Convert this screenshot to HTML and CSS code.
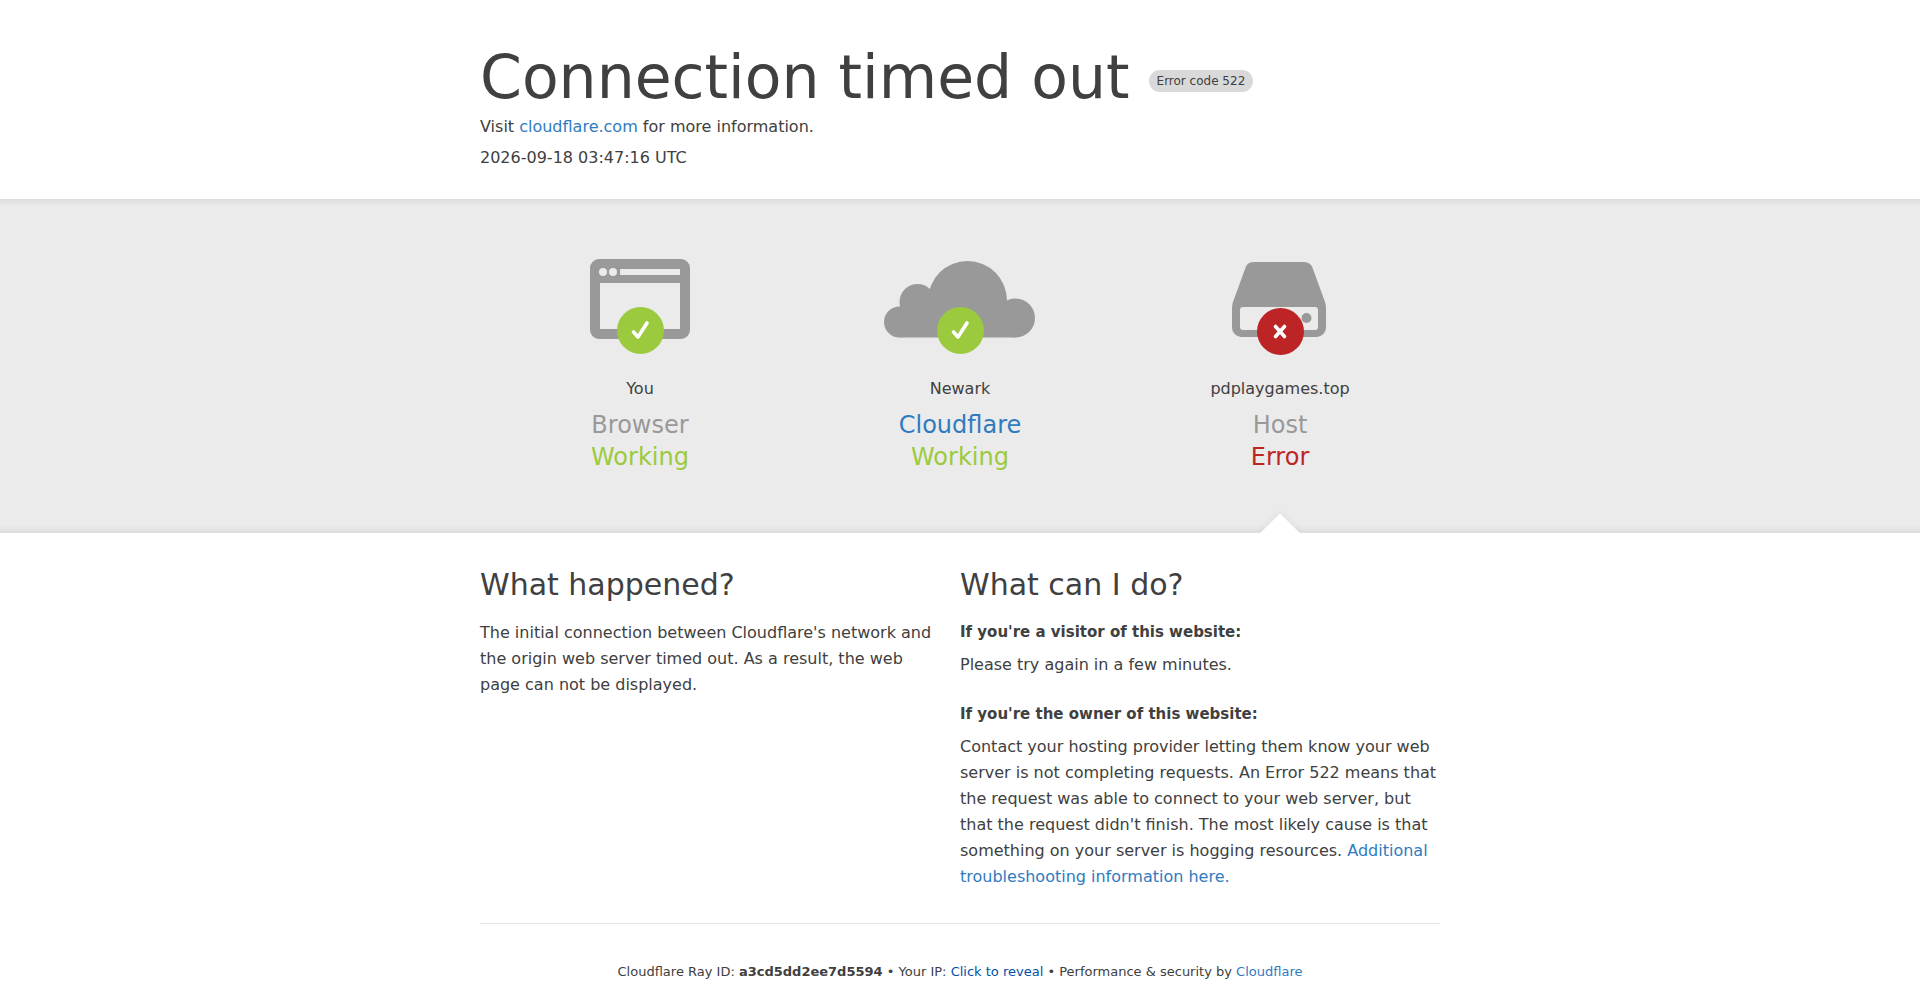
FILE: index.html
```html
<!DOCTYPE html>
<html lang="en-US">
<head>
  <meta charset="UTF-8" />
  <meta name="viewport" content="width=device-width, initial-scale=1.0" />
  <title>pdplaygames.top | 522: Connection timed out</title>
  <link rel="stylesheet" href="styles.css">
</head>
<body>
  <header class="container header">
    <h1>
      <span>Connection timed out</span>
      <span class="code-label">Error code 522</span>
    </h1>
    <p>Visit <a href="https://www.cloudflare.com/">cloudflare.com</a> for more information.</p>
    <p class="timestamp">2026-09-18 03:47:16 UTC</p>
  </header>

  <section class="status-band">
    <div class="container status-row">
      <div class="status">
        <svg class="status-icon" viewBox="0 0 160 100" aria-hidden="true">
          <path fill="#999" fill-rule="evenodd" d="M39 2H121A9 9 0 0 1 130 11V73A9 9 0 0 1 121 82H39A9 9 0 0 1 30 73V11A9 9 0 0 1 39 2ZM40 26V72H120V26ZM60 12V18H120V12Z" />
          <circle cx="43" cy="15" r="4" fill="#ebebeb" />
          <circle cx="53" cy="15" r="4" fill="#ebebeb" />
          <circle cx="80.500" cy="73.500" r="23.500" fill="#9bca3e" />
          <path fill="none" stroke="#fff" stroke-width="3.600" stroke-linecap="round" stroke-linejoin="round" d="M73.500 75L78 80L87 66" />
        </svg>
        <span class="place">You</span>
        <h3>Browser</h3>
        <span class="state ok">Working</span>
      </div>
      <div class="status">
        <svg class="status-icon" viewBox="0 0 160 100" aria-hidden="true">
          <g fill="#999">
            <circle cx="19.500" cy="65" r="15.500" />
            <circle cx="37.500" cy="45" r="18" />
            <circle cx="87.500" cy="43.500" r="39.500" />
            <circle cx="135.500" cy="61" r="19.500" />
            <path d="M19.500 80.500V60L37 45H120L135.500 60V80.500Z" />
          </g>
          <circle cx="80.500" cy="73.500" r="23.500" fill="#9bca3e" />
          <path fill="none" stroke="#fff" stroke-width="3.600" stroke-linecap="round" stroke-linejoin="round" d="M73.500 75L78 80L87 66" />
        </svg>
        <span class="place">Newark</span>
        <h3><a href="https://www.cloudflare.com/">Cloudflare</a></h3>
        <span class="state ok">Working</span>
      </div>
      <div class="status failed">
        <svg class="status-icon" viewBox="0 0 160 100" aria-hidden="true">
          <path fill="#999" fill-rule="evenodd" d="M53 5H104Q111 5 113 12L125 45Q126 48 126 51V70A9.500 9.500 0 0 1 117 80H41A9.500 9.500 0 0 1 32 70V51Q32 48 33 45L45 12Q47 5 53 5ZM43 50Q40 50 40 53V70Q40 73 43 73H115Q118 73 118 70V53Q118 50 115 50Z" />
          <circle cx="106.500" cy="61" r="5" fill="#999" />
          <circle cx="80.500" cy="74.500" r="23.500" fill="#bd2426" />
          <path fill="none" stroke="#fff" stroke-width="3.600" stroke-linecap="round" d="M75.500 69.500L84.500 79.500M84.500 69.500L75.500 79.500" />
        </svg>
        <span class="place">pdplaygames.top</span>
        <h3>Host</h3>
        <span class="state error">Error</span>
      </div>
    </div>
  </section>

  <main class="container columns">
    <section class="column">
      <h2>What happened?</h2>
      <p>The initial connection between Cloudflare's network and the origin web server timed out. As a result, the web page can not be displayed.</p>
    </section>
    <section class="column">
      <h2>What can I do?</h2>
      <h3>If you're a visitor of this website:</h3>
      <p>Please try again in a few minutes.</p>
      <h3>If you're the owner of this website:</h3>
      <p>Contact your hosting provider letting them know your web server is not completing requests. An Error 522 means that the request was able to connect to your web server, but that the request didn't finish. The most likely cause is that something on your server is hogging resources. <a href="https://support.cloudflare.com/">Additional troubleshooting information here.</a></p>
    </section>
  </main>

  <footer class="container footer">
    Cloudflare Ray ID: <strong>a3cd5dd2ee7d5594</strong> &bull;
    Your IP: <button type="button" id="ip-reveal">Click to reveal</button> &bull;
    Performance &amp; security by <a href="https://www.cloudflare.com/">Cloudflare</a>
  </footer>
</body>
</html>
```
FILE: styles.css
```css
* {
  box-sizing: border-box;
}
body {
  margin: 0;
  background-color: #fff;
  color: #404040;
  font-family: "DejaVu Sans", sans-serif;
  font-size: 16px;
  line-height: 24px;
}
h1, h2, h3, p {
  margin: 0;
  font-weight: normal;
}
a {
  color: #2f7bbf;
  text-decoration: none;
}
a:hover {
  color: #f68b1f;
}
.container {
  width: 100%;
  max-width: 960px;
  margin: 0 auto;
}

/* header */
.header {
  padding: 40px 0 29px;
}
h1 {
  display: flex;
  flex-wrap: wrap;
  align-items: center;
  gap: 0 19px;
  font-size: 60px;
  line-height: 75px;
}
.code-label {
  margin-top: 7px;
  padding: 1px 8px;
  border-radius: 12px;
  background-color: #d9d9d9;
  font-size: 12px;
  line-height: 20px;
}
.timestamp {
  margin-top: 7px;
}

/* status band */
.status-band {
  overflow: hidden;
  background-color: #ebebeb;
  background-image:
    linear-gradient(to bottom, #dedede, #ebebeb 8px, transparent 8px),
    linear-gradient(to top, #dedede, #ebebeb 8px);
}
.status-row {
  display: grid;
  grid-template-columns: repeat(3, 1fr);
}
.status {
  position: relative;
  display: flex;
  flex-direction: column;
  align-items: center;
  padding: 58px 0 60px;
}
.status-icon {
  width: 160px;
  height: 100px;
  margin-bottom: 20px;
}
.place {
  margin-bottom: 8px;
}
.status h3, .state {
  color: #999;
  font-size: 24px;
  line-height: 32px;
}
.state.ok {
  color: #9bca3e;
}
.state.error {
  color: #bd2426;
}
/* caret pointing at the failing part */
.failed::after {
  content: "";
  position: absolute;
  bottom: -14px;
  left: calc(50% - 14px);
  width: 28px;
  height: 28px;
  background-color: #fff;
  box-shadow: 0 0 6px #d9d9d9;
  transform: rotate(45deg);
}

/* explanation */
.columns {
  display: grid;
  grid-template-columns: 1fr 1fr;
  padding: 33px 0;
  border-bottom: 1px solid #e5e5e5;
}
.column:first-child {
  padding-right: 24px;
}
.column h2 {
  margin-bottom: 16px;
  font-size: 30px;
  line-height: 38px;
}
.column h3 {
  margin-bottom: 8px;
  font-size: 15px;
  font-weight: bold;
}
.column p {
  line-height: 26px;
}
.column p + h3 {
  margin-top: 24px;
}

/* footer */
.footer {
  padding: 38px 0;
  font-size: 13px;
  line-height: 20px;
  text-align: center;
}
.footer button {
  padding: 0;
  border: 0;
  background: none;
  color: #0051a8;
  font: inherit;
  cursor: pointer;
}

@media (max-width: 720px) {
  .container {
    padding-left: 16px;
    padding-right: 16px;
  }
  .status-row, .columns {
    grid-template-columns: 1fr;
  }
}
```
